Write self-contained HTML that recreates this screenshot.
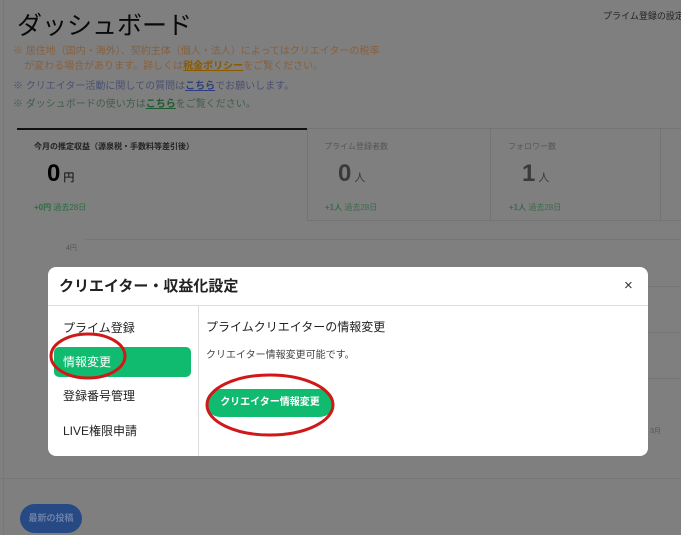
<!DOCTYPE html>
<html><head><meta charset="utf-8"><style>
*{margin:0;padding:0;box-sizing:border-box}
body{width:681px;height:535px;overflow:hidden;background:#7f7f7f;font-family:"Liberation Sans","Noto Sans CJK JP",sans-serif;position:relative;color:#000}
.a{position:absolute;white-space:nowrap}
</style></head><body>
<div class="a" style="left:0;top:0;width:4px;height:535px;border-right:1px solid #777"></div>
<div class="a" style="left:17px;top:6px;font-size:25px;color:#0a0a0a">ダッシュボード</div>
<div class="a" style="left:603px;top:9px;font-size:9px;color:#222">プライム登録の設定</div>
<div class="a" style="left:13px;top:44px;font-size:10px;line-height:15px;color:#86603e">※ 居住地（国内・海外）、契約主体（個人・法人）によってはクリエイターの税率<br>&nbsp;&nbsp;&nbsp;&nbsp;が変わる場合があります。詳しくは<u style="color:#8a5a00;font-weight:bold">税金ポリシー</u>をご覧ください。</div>
<div class="a" style="left:13px;top:77px;font-size:10px;color:#4a5070">※ クリエイター活動に関しての質問は<u style="color:#2b3f80;font-weight:bold">こちら</u>でお願いします。</div>
<div class="a" style="left:13px;top:95px;font-size:10px;color:#3f5e4a">※ ダッシュボードの使い方は<u style="color:#1e5a30;font-weight:bold">こちら</u>をご覧ください。</div>
<div class="a" style="left:17px;top:128px;width:290px;height:2px;background:#111"></div>
<div class="a" style="left:307px;top:128px;width:380px;height:93px;border:1px solid #747474;border-right:none"></div>
<div class="a" style="left:490px;top:128px;width:1px;height:93px;background:#747474"></div>
<div class="a" style="left:660px;top:128px;width:1px;height:93px;background:#747474"></div>
<div class="a" style="left:34px;top:141px;font-size:8px;font-weight:bold;color:#222">今月の推定収益（源泉税・手数料等差引後）</div>
<div class="a" style="left:324px;top:141px;font-size:8px;color:#555">プライム登録者数</div>
<div class="a" style="left:508px;top:141px;font-size:8px;color:#555">フォロワー数</div>
<div class="a" style="left:47px;top:160px;font-size:24px;font-weight:bold;color:#000">0<span style="font-size:11px;font-weight:normal"> 円</span></div>
<div class="a" style="left:338px;top:160px;font-size:24px;font-weight:bold;color:#3a3a3a">0<span style="font-size:11px;font-weight:normal"> 人</span></div>
<div class="a" style="left:522px;top:160px;font-size:24px;font-weight:bold;color:#3a3a3a">1<span style="font-size:11px;font-weight:normal"> 人</span></div>
<div class="a" style="left:34px;top:202px;font-size:8px;color:#2d6b42"><b>+0円</b> 過去28日</div>
<div class="a" style="left:325px;top:202px;font-size:8px;color:#3c6b4c"><b>+1人</b> 過去28日</div>
<div class="a" style="left:509px;top:202px;font-size:8px;color:#3c6b4c"><b>+1人</b> 過去28日</div>
<div class="a" style="left:85px;top:239px;width:596px;height:1px;background:#757575"></div>
<div class="a" style="left:66px;top:243px;font-size:7px;color:#555">4円</div>
<div class="a" style="left:648px;top:286px;width:33px;height:1px;background:#757575"></div>
<div class="a" style="left:648px;top:332px;width:33px;height:1px;background:#757575"></div>
<div class="a" style="left:648px;top:378px;width:33px;height:1px;background:#757575"></div>
<div class="a" style="left:650px;top:426px;font-size:7px;color:#555">3月</div>
<div class="a" style="left:0;top:478px;width:681px;height:1px;background:#777"></div>
<div class="a" style="left:20px;top:504px;width:62px;height:29px;border-radius:15px;background:#274a85;color:#6d7fa8;font-size:9px;font-weight:bold;text-align:center;line-height:29px">最新の投稿</div>

<div class="a" style="left:48px;top:267px;width:600px;height:189px;background:#fff;border-radius:8px;overflow:hidden">
 <div class="a" style="left:11px;top:8px;font-size:15px;font-weight:bold;color:#222">クリエイター・収益化設定</div>
 <div class="a" style="left:576px;top:10px;font-size:15px;color:#333">×</div>
 <div class="a" style="left:0;top:38px;width:600px;height:1px;background:#ddd"></div>
 <div class="a" style="left:150px;top:39px;width:1px;height:150px;background:#ddd"></div>
 <div class="a" style="left:15px;top:52px;font-size:12px;color:#222">プライム登録</div>
 <div class="a" style="left:6px;top:80px;width:137px;height:30px;background:#10bb70;border-radius:5px"></div>
 <div class="a" style="left:15px;top:86px;font-size:12px;color:#fff">情報変更</div>
 <div class="a" style="left:15px;top:120px;font-size:12px;color:#222">登録番号管理</div>
 <div class="a" style="left:15px;top:155px;font-size:12px;color:#222">LIVE権限申請</div>
 <div class="a" style="left:158px;top:51px;font-size:12px;color:#222">プライムクリエイターの情報変更</div>
 <div class="a" style="left:158px;top:79px;font-size:10px;color:#444">クリエイター情報変更可能です。</div>
 <div class="a" style="left:158px;top:122px;width:128px;height:28px;background:#10bb70;border-radius:14px;color:#fff;font-size:10px;font-weight:bold;text-align:center;line-height:28px">クリエイター情報変更</div>
</div>
<svg class="a" style="left:0;top:0" width="681" height="535">
 <ellipse cx="88" cy="356" rx="37" ry="22" fill="none" stroke="#d01818" stroke-width="3"/>
 <ellipse cx="270" cy="405" rx="63" ry="30" fill="none" stroke="#d01818" stroke-width="3"/>
</svg>
</body></html>
